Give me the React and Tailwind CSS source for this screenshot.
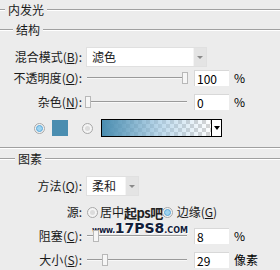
import React from "react";

const font = { fontFamily: '"Noto Sans CJK SC", "Liberation Sans", sans-serif' };

function Line() {
	return (
		<div className="flex-1 flex flex-col">
			<div className="h-px bg-[#a0a0a0]" />
			<div className="h-px bg-white" />
		</div>
	);
}

function Label({ text, k }) {
	return (
		<div className="w-[83px] text-right pr-[1px] text-[12px] leading-none text-[#1a1a1a]">
			{text}(<span className="underline">{k}</span>):
		</div>
	);
}

function Arrow() {
	return (
		<div className="w-[13px] h-full bg-[#e4e4e4] border-l border-[#f4f4f4] flex items-center justify-center">
			<div className="w-0 h-0 border-l-[3px] border-r-[3px] border-t-[3px] border-l-transparent border-r-transparent border-t-[#8a8a8a]" />
		</div>
	);
}

function Slider({ pos }) {
	return (
		<div className="relative w-[102px] h-[14px] ml-[2px]">
			<div className="absolute left-[2px] right-0 top-[6px] h-px bg-[#9a9a9a]" />
			<div className="absolute left-[2px] right-0 top-[7px] h-px bg-[#f8f8f8]" />
			<div
				className="absolute top-[1px] w-[6px] h-[12px] bg-[#f6f6f6] border border-[#b8b8b8]"
				style={{ left: pos }}
			/>
		</div>
	);
}

function Input({ value }) {
	return (
		<div className="ml-[7px] w-[35px] h-[16px] bg-white border-t border-l border-[#d8d8d8] text-[12px] leading-[15px] pl-[2px] text-black">
			{value}
		</div>
	);
}

function SliderRow({ label, k, pos, value, unit, className }) {
	return (
		<div className={`flex items-center h-[16px] ${className}`}>
			<Label text={label} k={k} />
			<Slider pos={pos} />
			<Input value={value} />
			<div className="ml-[5px] text-[12px] text-black">{unit}</div>
		</div>
	);
}

function Radio({ on }) {
	return (
		<div className="w-[11px] h-[11px] rounded-full border border-[#a8a8a8] bg-[#f4f4f4] flex items-center justify-center">
			{on ? (
				<div className="w-[7px] h-[7px] rounded-full bg-[#9fd4f0] border border-[#5aa7d8]" />
			) : (
				<div className="w-[5px] h-[5px] rounded-full bg-[#dcdcdc]" />
			)}
		</div>
	);
}

export default function App() {
	return (
		<div className="w-[280px] h-[270px] overflow-hidden bg-[#ececec] text-[#1a1a1a]" style={font}>
			<div className="flex items-center h-[20px]">
				<div className="w-[5px] flex flex-col">
					<div className="h-px bg-[#a0a0a0]" />
					<div className="h-px bg-white" />
				</div>
				<div className="px-[3px] text-[12px] leading-none">内发光</div>
				<Line />
			</div>
			<div className="flex items-center h-[20px]">
				<div className="w-[13px] flex flex-col">
					<div className="h-px bg-[#a0a0a0]" />
					<div className="h-px bg-white" />
				</div>
				<div className="px-[3px] text-[12px] leading-none">结构</div>
				<Line />
			</div>

			<div className="flex items-center h-[20px] mt-[7px]">
				<Label text="混合模式" k="B" />
				<div className="ml-[3px] w-[121px] h-[20px] bg-white border border-[#e0e0e0] flex">
					<div className="flex-1 pl-[5px] text-[12px] leading-[18px]">滤色</div>
					<Arrow />
				</div>
			</div>

			<SliderRow label="不透明度" k="O" pos={97} value="100" unit="%" className="mt-[3px]" />
			<SliderRow label="杂色" k="N" pos={0} value="0" unit="%" className="mt-[8px]" />

			<div className="flex items-center h-[18px] mt-[9px]">
				<div className="ml-[34px]"><Radio on /></div>
				<div className="ml-[7px] w-[16px] h-[16px] bg-[#4a8db0]" />
				<div className="ml-[14px]"><Radio /></div>
				<div className="ml-[8px] w-[121px] h-[18px] border border-black flex bg-white">
					<div
						className="flex-1 h-full"
						style={{
							backgroundImage:
								"linear-gradient(to right, rgba(74,141,176,1), rgba(150,195,225,0.6) 55%, rgba(255,255,255,0)), repeating-conic-gradient(#d4d4d4 0% 25%, #ffffff 0% 50%)",
							backgroundSize: "100% 100%, 8px 8px",
						}}
					/>
					<div className="w-[10px] h-full border-l border-black flex items-center justify-center">
						<div className="w-0 h-0 border-l-[3px] border-r-[3px] border-t-[4px] border-l-transparent border-r-transparent border-t-black" />
					</div>
				</div>
			</div>

			<div className="mt-[10px] flex"><Line /></div>

			<div className="flex items-center h-[16px] mt-[2px]">
				<div className="w-[15px] flex flex-col">
					<div className="h-px bg-[#a0a0a0]" />
					<div className="h-px bg-white" />
				</div>
				<div className="px-[3px] text-[12px] leading-none">图素</div>
				<Line />
			</div>

			<div className="flex items-center h-[20px] mt-[9px]">
				<Label text="方法" k="Q" />
				<div className="ml-[3px] w-[53px] h-[20px] bg-white border border-[#e0e0e0] flex">
					<div className="flex-1 pl-[5px] text-[12px] leading-[18px]">柔和</div>
					<Arrow />
				</div>
			</div>

			<div className="relative flex items-center h-[16px] mt-[8px]">
				<div className="w-[83px] text-right pr-[1px] text-[12px] leading-none">源:</div>
				<div className="ml-[4px]"><Radio /></div>
				<div className="ml-[2px] text-[12px] leading-none">居中</div>
				<div className="text-[13px] leading-none text-[#222] font-bold tracking-[-0.5px]">起ps吧</div>
				<div className="ml-[-1px]"><Radio on /></div>
				<div className="ml-[4px] text-[12px] leading-none">
					边缘(<span className="underline">G</span>)
				</div>
			</div>

			<div className="relative">
				<div
					className="absolute left-[92px] top-[1px] flex items-end leading-none text-[#12203a] font-bold"
					style={{ fontFamily: '"DejaVu Sans", sans-serif', textShadow: "0 0 1px #fff, 1px 1px 0 #fff" }}
				>
					<span className="text-[8px] tracking-[-0.5px]">www.</span>
					<span className="text-[14px]">17PS8</span>
					<span className="text-[8px]">.COM</span>
				</div>
			</div>

			<SliderRow label="阻塞" k="C" pos={8} value="8" unit="%" className="mt-[8px]" />
			<SliderRow label="大小" k="S" pos={17} value="29" unit="像素" className="mt-[8px]" />
		</div>
	);
}
